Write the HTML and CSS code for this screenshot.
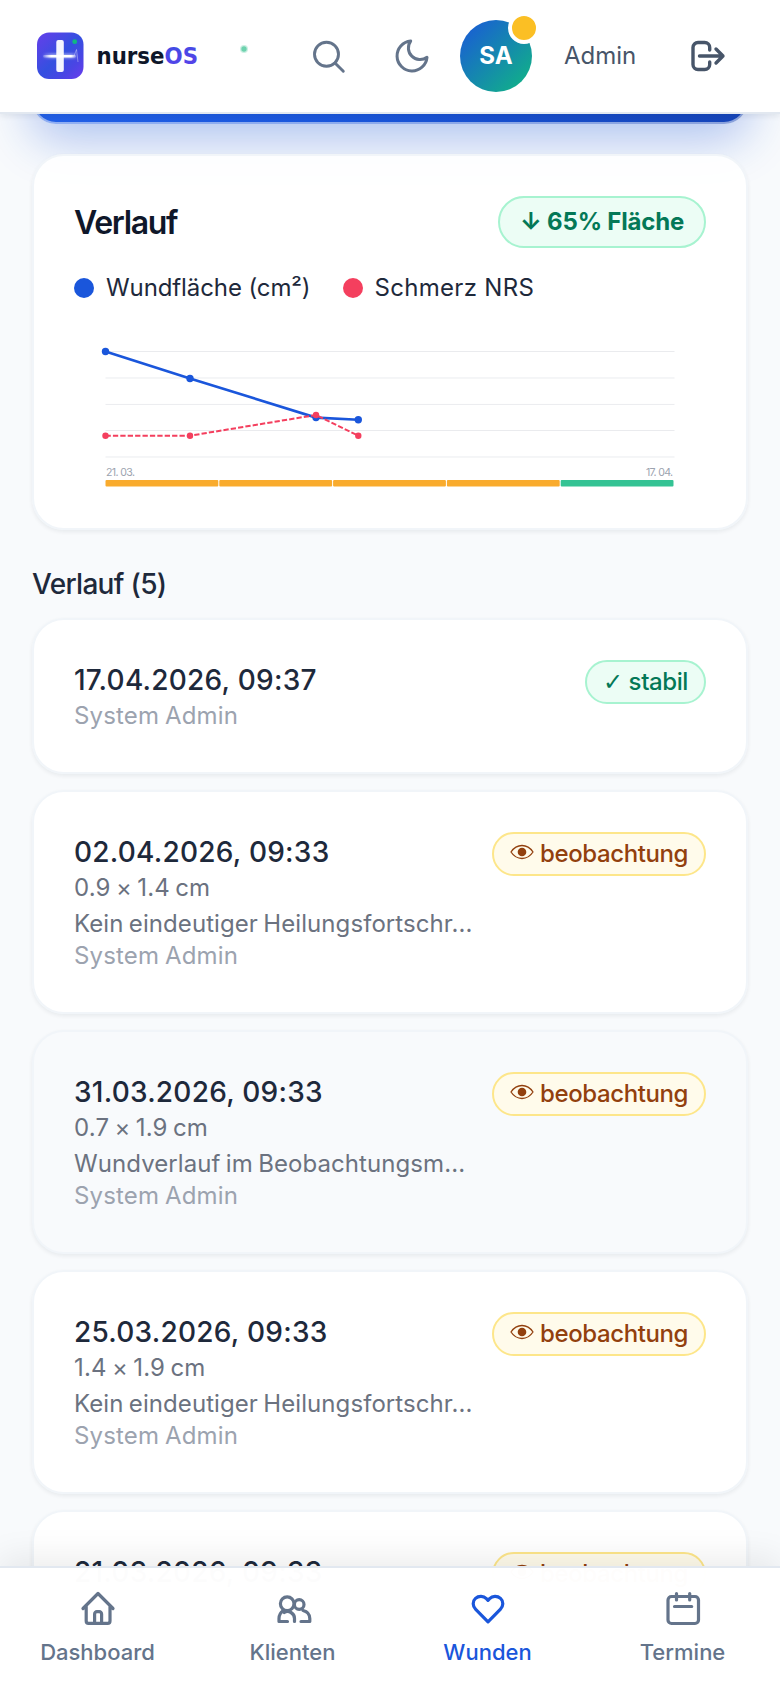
FILE: index.html
```html
<!DOCTYPE html>
<html lang="de">
<head>
<meta charset="utf-8">
<title>nurseOS – Wunden</title>
<link rel="stylesheet" href="styles.css">
</head>
<body>
<svg class="defs" width="0" height="0">
  <symbol id="eye" viewBox="0 0 24 16"><path d="M1 8C4 3.500 8 1.500 12 1.500S20 3.500 23 8C20 12.500 16 14.500 12 14.500S4 12.500 1 8Z" fill="none" stroke="currentColor" stroke-width="1.300"/><circle cx="12" cy="8" r="4.300" fill="currentColor"/></symbol>
</svg>
<div class="screen">
  <header class="topbar">
    <svg class="brand" width="214" height="64" viewBox="0 0 214 64">
      <defs>
        <linearGradient id="tile" x1="0" y1="0" x2="1" y2="1">
          <stop offset="0" stop-color="#6340ea"/><stop offset=".2" stop-color="#5345e6"/><stop offset=".5" stop-color="#3450e0"/><stop offset=".75" stop-color="#4a45e4"/><stop offset="1" stop-color="#6a3ced"/>
        </linearGradient>
        <linearGradient id="os" x1="0" y1="0" x2="1" y2="1">
          <stop offset="0" stop-color="#2f55e0"/><stop offset="1" stop-color="#5b40ea"/>
        </linearGradient>
        <linearGradient id="beam" x1="0" y1="0" x2="1" y2="0">
          <stop offset="0" stop-color="#fff" stop-opacity=".15"/><stop offset=".25" stop-color="#fff"/><stop offset=".85" stop-color="#fff"/><stop offset="1" stop-color="#fff" stop-opacity=".2"/>
        </linearGradient>
        <filter id="soft" x="-20%" y="-100%" width="140%" height="300%"><feGaussianBlur stdDeviation=".8"/></filter>
      </defs>
      <rect x="6" y="8.500" width="46.500" height="46.500" rx="12" fill="url(#tile)"/>
      <rect x="12" y="29.500" width="34" height="5" rx="2" fill="url(#beam)" opacity=".45" filter="url(#soft)"/>
      <rect x="12" y="31" width="33" height="2.500" rx="1" fill="url(#beam)"/>
      <path d="M43 32L45.500 25.500L47 38" fill="none" stroke="#fff" stroke-width="1" opacity=".35"/>
      <rect x="25.300" y="16" width="7.500" height="32" rx="2" fill="#fff" opacity=".95"/>
      <circle cx="43.700" cy="17.700" r="2.400" fill="#10b981"/>
      <text class="brand-name" x="65.500" y="40" textLength="101.500" lengthAdjust="spacingAndGlyphs">nurse<tspan fill="url(#os)">OS</tspan></text>
      <circle cx="213" cy="25" r="4" fill="#6ed2ae" opacity=".35"/>
      <circle cx="213" cy="25" r="2.700" fill="#6ed2ae"/>
    </svg>
    <div class="actions">
      <span class="action"><svg class="icon" width="40" height="40" viewBox="0 0 40 40"><circle cx="18.500" cy="18.300" r="12"/><path d="M27 27L35.300 35.300"/></svg></span>
      <span class="action"><svg class="icon icon-moon" width="40" height="40" viewBox="0 0 24 24"><path d="M21 12.790A9 9 0 1 1 11.210 3 7 7 0 0 0 21 12.790z"/></svg></span>
      <span class="avatar">SA<i class="avatar-dot"></i></span>
    </div>
    <span class="user">Admin</span>
    <svg class="logout" width="40" height="40" viewBox="0 0 40 40"><path d="M21.700 14V11.500a5 5 0 0 0-5-5H10a5 5 0 0 0-5 5v17a5 5 0 0 0 5 5h6.700a5 5 0 0 0 5-5V26M11.500 20H35M28 13l7 7-7 7"/></svg>
  </header>

  <main class="content">
    <div class="hero"></div>

    <section class="card chart-card">
      <div class="chart-head">
        <h2>Verlauf</h2>
        <span class="trend">↓ 65% Fläche</span>
      </div>
      <div class="legend">
        <span class="legend-item legend-area"><i class="dot dot-blue"></i>Wundfläche (cm²)</span>
        <span class="legend-item legend-pain"><i class="dot dot-red"></i>Schmerz NRS</span>
      </div>
      <svg class="chart" width="632" height="168" viewBox="0 0 632 168">
        <g stroke="#e5e7eb" stroke-width="1">
          <path d="M31.500 29.500H600.500M31.500 56H600.500M31.500 82.400H600.500M31.500 108.500H600.500M31.500 135H600.500" opacity=".8"/>
        </g>
        <path d="M31.500 29.500L116 56.500L242 95.600L284.300 97.700" fill="none" stroke="#1a56db" stroke-width="2.600"/>
        <g fill="#1a56db"><circle cx="31.500" cy="29.500" r="3.700"/><circle cx="116" cy="56.500" r="3.700"/><circle cx="242" cy="95.600" r="3.700"/><circle cx="284.300" cy="97.700" r="3.700"/></g>
        <path d="M31.500 113.700H116L242 93L284.300 113.700" fill="none" stroke="#f43f5e" stroke-width="2" stroke-dasharray="5.300 2.100"/>
        <g fill="#f43f5e"><circle cx="31.500" cy="113.700" r="3.200"/><circle cx="116" cy="113.700" r="3.200"/><circle cx="242" cy="93" r="3.200"/><circle cx="284.300" cy="113.700" r="3.200"/></g>
        <text class="tick" x="32" y="153.800" textLength="29">21. 03.</text>
        <text class="tick" x="572" y="153.800" textLength="27">17. 04.</text>
        <g fill="#f9ab2d"><rect x="31.500" y="158" width="112.800" height="6.500" rx="1"/><rect x="145.300" y="158" width="112.800" height="6.500" rx="1"/><rect x="259.100" y="158" width="112.800" height="6.500" rx="1"/><rect x="372.900" y="158" width="112.800" height="6.500" rx="1"/></g>
        <rect x="486.700" y="158" width="112.800" height="6.500" rx="1" fill="#34c394"/>
      </svg>
    </section>

    <h3 class="section-title">Verlauf (5)</h3>

    <div class="entries">
      <article class="card entry">
        <div class="info"><div class="date">17.04.2026, 09:37</div><div class="author">System Admin</div></div>
        <span class="status ok"><span class="check">✓</span> stabil</span>
      </article>
      <article class="card entry">
        <div class="info"><div class="date">02.04.2026, 09:33</div><div class="size">0.9 × 1.4 cm</div><div class="note">Kein eindeutiger Heilungsfortschr...</div><div class="author">System Admin</div></div>
        <span class="status watch"><svg class="eye" width="24" height="16"><use href="#eye"/></svg>beobachtung</span>
      </article>
      <article class="card entry active">
        <div class="info"><div class="date">31.03.2026, 09:33</div><div class="size">0.7 × 1.9 cm</div><div class="note">Wundverlauf im Beobachtungsm...</div><div class="author">System Admin</div></div>
        <span class="status watch"><svg class="eye" width="24" height="16"><use href="#eye"/></svg>beobachtung</span>
      </article>
      <article class="card entry">
        <div class="info"><div class="date">25.03.2026, 09:33</div><div class="size">1.4 × 1.9 cm</div><div class="note">Kein eindeutiger Heilungsfortschr...</div><div class="author">System Admin</div></div>
        <span class="status watch"><svg class="eye" width="24" height="16"><use href="#eye"/></svg>beobachtung</span>
      </article>
      <article class="card entry last">
        <div class="info"><div class="date">21.03.2026, 09:33</div></div>
        <span class="status watch"><svg class="eye" width="24" height="16"><use href="#eye"/></svg>beobachtung</span>
      </article>
    </div>
  </main>

  <nav class="tabs">
    <a class="tab"><svg width="40" height="40" viewBox="0 0 40 40"><path d="M5 20.500L20 5.500L35 20.500M8.200 18V33a2.300 2.300 0 0 0 2.300 2.300H29.700A2.300 2.300 0 0 0 32 33V18M16.600 35V26a2.300 2.300 0 0 1 2.300-2.300h2.400a2.300 2.300 0 0 1 2.300 2.300v9"/></svg>Dashboard</a>
    <a class="tab"><svg width="40" height="40" viewBox="0 0 40 40"><circle cx="14.200" cy="15.700" r="6.800"/><circle cx="26.200" cy="16.500" r="4.800"/><path d="M14.500 33.500H6V30.500C6 26.800 7.600 24.500 10.200 22.500M11.300 24.500C13 23.300 15.800 23.300 18 24.500C20.200 25.800 21.500 27.800 21.500 30.500V33.500M28 33.500H36.800V30.500C36.800 26.500 34 23.500 30 22.500"/></svg>Klienten</a>
    <a class="tab current"><svg width="40" height="40" viewBox="0 0 40 40"><path d="M20 33.800L7.700 21.400C4.400 18 4.400 13.200 7.500 10.400C10.700 7.500 15.500 7.800 18.400 10.600L20 12.300L21.600 10.600C24.500 7.800 29.300 7.500 32.500 10.400C35.600 13.200 35.600 18 32.300 21.400Z"/></svg>Wunden</a>
    <a class="tab"><svg width="40" height="40" viewBox="0 0 40 40"><rect x="5" y="8.500" width="30.500" height="27" rx="3.500"/><path d="M13.500 5.500V12M26.700 5.500V12M11.500 18.500H28.700"/></svg>Termine</a>
  </nav>
</div>
</body>
</html>
```
FILE: styles.css
```css
* { box-sizing: border-box; }

body {
  margin: 0;
  background: #f8fafc;
  font-family: Inter, "DejaVu Sans", sans-serif;
  font-size: 24px;
  line-height: 32px;
  letter-spacing: 0.24px;
  color: #1e293b;
}

.defs { position: absolute; }

.screen {
  position: relative;
  width: 780px;
  height: 1688px;
  overflow: hidden;
}

/* Top bar */
.topbar {
  position: relative;
  z-index: 3;
  display: flex;
  align-items: center;
  height: 114px;
  padding: 0 52px 0 31px;
  background: #fff;
  border-bottom: 2px solid #e2e8f0;
  box-shadow: 0 2px 6px rgba(15, 23, 42, 0.08);
}

.brand { overflow: visible; margin-top: -0.5px; }
.brand-name {
  fill: #0f172a;
  font: bold 23px "DejaVu Sans", sans-serif;
  letter-spacing: 0;
}

.actions { display: flex; gap: 12px; margin-left: 47px; }
.action {
  display: flex;
  align-items: center;
  justify-content: center;
  width: 72px;
  height: 72px;
}
.icon {
  fill: none;
  stroke: #64748b;
  stroke-width: 2.9;
  stroke-linecap: round;
  stroke-linejoin: round;
}
.icon-moon { stroke-width: 1.8; }

.avatar {
  position: relative;
  display: flex;
  align-items: center;
  justify-content: center;
  width: 72px;
  height: 72px;
  border-radius: 50%;
  background: linear-gradient(135deg, #1a56db, #10b981);
  color: #fff;
  font-weight: 700;
}
.avatar-dot {
  position: absolute;
  top: -8px;
  right: -8px;
  width: 32px;
  height: 32px;
  border: 4px solid #fff;
  border-radius: 50%;
  background: #fbbf24;
}

.user { margin-left: 32px; color: #475569; letter-spacing: 0; }
.logout {
  margin-left: auto;
  fill: none;
  stroke: #475569;
  stroke-width: 3.4;
  stroke-linecap: round;
  stroke-linejoin: round;
}

/* Content */
.content { padding: 0 32px; }

.hero {
  height: 110px;
  margin-top: -100px;
  border: 2px solid rgba(255, 255, 255, 0.5);
  border-radius: 24px;
  background: linear-gradient(135deg, #2563eb, #1a56db 50%, #1544b8) border-box;
  box-shadow: 0 16px 48px rgba(26, 86, 219, 0.33);
}

.card {
  border: 2px solid #f1f5f9;
  border-radius: 32px;
  background: rgba(255, 255, 255, 0.9);
  box-shadow: 0 2px 4px rgba(15, 23, 42, 0.07);
}

.chart-card {
  height: 376px;
  margin-top: 30px;
  padding: 40px 40px 0;
}
.chart-head {
  display: flex;
  align-items: center;
  justify-content: space-between;
}
.chart-head h2 {
  margin: 2px 0 0;
  font-size: 32px;
  font-weight: 600;
  letter-spacing: -1.3px;
  color: #0f172a;
}
.trend {
  padding: 8px 20px;
  border: 2px solid #a7f3d0;
  border-radius: 26px;
  background: #ecfdf5;
  color: #047857;
  font-weight: 700;
  letter-spacing: -0.2px;
}
.legend { display: flex; gap: 32px; margin-top: 24px; }
.legend-item { display: flex; align-items: center; gap: 12px; }
.legend-area { letter-spacing: -0.1px; }
.legend-pain { letter-spacing: 0.3px; }
.dot { width: 20px; height: 20px; border-radius: 50%; }
.dot-blue { background: #1a56db; }
.dot-red { background: #f43f5e; }
.chart { display: block; margin-top: 18px; }
.tick { fill: #9ca3af; font-size: 10.6px; letter-spacing: 0; }

.section-title {
  margin: 34px 0 14px;
  font-size: 28px;
  font-weight: 500;
  line-height: 40px;
  letter-spacing: -0.68px;
  color: #1e293b;
}

/* Entries */
.entries { display: flex; flex-direction: column; gap: 16px; }
.entry {
  display: flex;
  align-items: flex-start;
  justify-content: space-between;
  padding: 40px;
}
.active { background: #f8fafc; }
.last { height: 224px; }
.info { display: flex; flex-direction: column; }
.date {
  font-size: 28px;
  font-weight: 500;
  line-height: 40px;
  letter-spacing: 0.24px;
}
.size { color: #6b7280; word-spacing: -1.6px; letter-spacing: 0.15px; }
.note {
  margin-top: 4px;
  color: #6b7280;
  letter-spacing: 0.08px;
  word-spacing: -1.5px;
}
.author { color: #9ca3af; letter-spacing: 0.15px; word-spacing: -1px; }

.status {
  display: block;
  padding: 4px 16px;
  border: 2px solid;
  border-radius: 22px;
  font-weight: 500;
  letter-spacing: -0.4px;
}
.ok { border-color: #a7f3d0; background: #ecfdf5; color: #047857; }
.watch { border-color: #fde68a; background: #fffbeb; color: #92400e; }
.check {
  font-family: "DejaVu Sans", sans-serif;
  font-weight: 400;
  line-height: 1;
}
.eye { margin-right: 6px; vertical-align: 2px; }

/* Bottom tabs */
.tabs {
  position: absolute;
  left: 0;
  right: 0;
  bottom: 0;
  z-index: 3;
  display: grid;
  grid-template-columns: repeat(4, 1fr);
  height: 122px;
  border-top: 2px solid #e2e8f0;
  background: rgba(255, 255, 255, 0.99);
  box-shadow: 0 -8px 32px rgba(0, 0, 0, 0.08);
}
.tab {
  display: flex;
  flex-direction: column;
  align-items: center;
  gap: 8px;
  padding-top: 20px;
  color: #64748b;
  font-size: 22px;
  font-weight: 500;
  letter-spacing: 0;
}
.tab svg {
  fill: none;
  stroke: currentColor;
  stroke-width: 3.2;
  stroke-linecap: round;
  stroke-linejoin: round;
}
.current { color: #1a56db; }
```
